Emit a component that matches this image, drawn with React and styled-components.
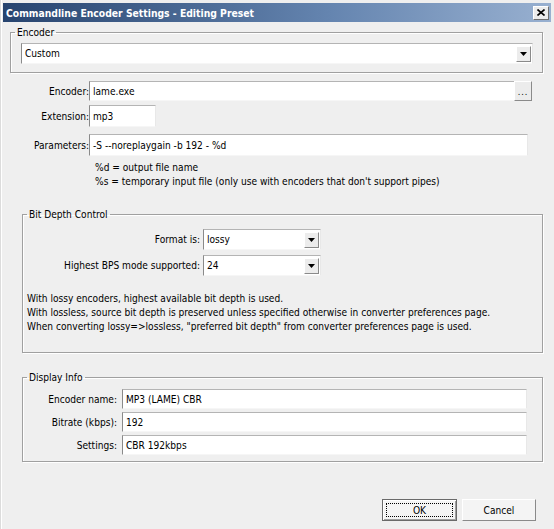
import React from 'react'
import styled, { createGlobalStyle } from 'styled-components'

const GlobalStyle = createGlobalStyle`
    html, body {
        margin: 0;
        padding: 0;
        background: #efefef;
    }
    body {
        font-family: "DejaVu Sans Condensed", "DejaVu Sans", sans-serif;
        font-size: 10.1px;
        color: #000;
    }
`

const Window = styled.div`
    width: 554px;
    height: 529px;
    box-sizing: border-box;
    padding: 3px 3px 8px 3px;
    display: flex;
    flex-direction: column;
    background: #efefef;
    box-shadow: inset 1px 0 0 #dcdcdc, inset 2px 0 0 #fff;
`

const TitleBar = styled.div`
    height: 19px;
    flex-shrink: 0;
    display: flex;
    align-items: center;
    justify-content: space-between;
    padding: 0 2px 0 3px;
    background: linear-gradient(to right, #27446f, #6585b0 60%, #98b0d0);
    color: #fff;
    font-weight: bold;
    font-size: 10.3px;
`

const CloseButton = styled.div`
    width: 14px;
    height: 12px;
    display: flex;
    align-items: center;
    justify-content: center;
    background: #ececec;
    border: 1px solid;
    border-color: #fff #6f6f6f #6f6f6f #fff;
`

const Group = styled.fieldset`
    margin: ${p => p.$top}px 8px 0 ${p => p.$left}px;
    padding: ${p => p.$pad};
    border: 1px solid #a0a0a0;
    box-shadow: 1px 1px 0 #fff, inset 1px 1px 0 #fff;
    min-width: 0;
`

const Legend = styled.legend`
    padding: 0 2px;
    margin-left: ${p => p.$offset}px;
    line-height: 13px;
`

const Field = styled.div`
    box-sizing: border-box;
    height: ${p => p.$h || 21}px;
    width: ${p => (p.$w ? `${p.$w}px` : 'auto')};
    background: #fff;
    border: 1px solid;
    border-color: #b4b4b4 #e8e8e8 #f6f6f6 #8a8a8a;
    padding-left: 3px;
    display: flex;
    align-items: center;
    white-space: nowrap;
`

const Combo = styled(Field)`
    justify-content: space-between;
    padding-right: 1px;
`

const DropButton = styled.div`
    width: 15px;
    height: 16px;
    box-sizing: border-box;
    background: #ececec;
    border: 1px solid;
    border-color: #fff #8a8a8a #8a8a8a #fff;
    display: flex;
    align-items: center;
    justify-content: center;
`

const Row = styled.div`
    display: grid;
    grid-template-columns: ${p => p.$label}px auto;
    column-gap: ${p => p.$gap || 0}px;
    align-items: center;
    margin-top: ${p => p.$top || 0}px;
`

const Label = styled.div`
    text-align: right;
    white-space: nowrap;
`

const FieldWithButton = styled.div`
    display: flex;
    align-items: center;
`

const BrowseButton = styled.div`
    width: 18px;
    height: 20px;
    box-sizing: border-box;
    margin-left: -2px;
    background: #ececec;
    border: 1px solid;
    border-color: #fff #8a8a8a #8a8a8a #fff;
    display: flex;
    align-items: flex-end;
    justify-content: center;
    padding-bottom: 3px;
    font-size: 9px;
    letter-spacing: 1px;
`

const Notes = styled.div`
    margin: ${p => p.$top}px 0 0 ${p => p.$left}px;
    line-height: 14px;
    white-space: nowrap;
`

const ButtonBar = styled.div`
    margin-top: auto;
    display: flex;
    justify-content: flex-end;
    gap: 5px;
    padding-right: 15px;
`

const Button = styled.div`
    width: ${p => p.$w}px;
    height: 22px;
    box-sizing: border-box;
    background: #f4f4f4;
    border: 1px solid;
    border-color: ${p => (p.$focused ? '#6a6a6a' : '#fff #8a8a8a #8a8a8a #fff')};
    box-shadow: ${p => (p.$focused ? 'inset 1px 1px 0 #fff, inset -1px -1px 0 #a0a0a0' : 'none')};
    display: flex;
    align-items: center;
    justify-content: center;
    padding: 3px;
`

const FocusRing = styled.div`
    flex: 1;
    align-self: stretch;
    border: 1px dotted #000;
    display: flex;
    align-items: center;
    justify-content: center;
`

const Arrow = () => (
    <svg width="7" height="4" viewBox="0 0 7 4">
        <path d="M0 0h7L3.5 4z" fill="#000" />
    </svg>
)

const Select = ({ value, w }) => (
    <Combo $w={w}>
        <span>{value}</span>
        <DropButton><Arrow /></DropButton>
    </Combo>
)

export default function App() {
    return (
        <>
            <GlobalStyle />
            <Window>
                <TitleBar>
                    <span>Commandline Encoder Settings - Editing Preset</span>
                    <CloseButton>
                        <svg width="8" height="7" viewBox="0 0 8 7">
                            <path d="M0.5 0.5L7.5 6.5M7.5 0.5L0.5 6.5" stroke="#000" strokeWidth="1.6" />
                        </svg>
                    </CloseButton>
                </TitleBar>

                <Group $top={4} $left={7} $pad="4px 9px 8px 10px">
                    <Legend $offset={-6}>Encoder</Legend>
                    <Select value="Custom" />
                </Group>

                <Row $label={86} $top={8}>
                    <Label>Encoder:</Label>
                    <FieldWithButton>
                        <Field $w={427} $h={20}>lame.exe</Field>
                        <BrowseButton>...</BrowseButton>
                    </FieldWithButton>
                </Row>
                <Row $label={86} $top={4}>
                    <Label>Extension:</Label>
                    <Field $w={67} $h={22}>mp3</Field>
                </Row>
                <Row $label={86} $top={7}>
                    <Label>Parameters:</Label>
                    <Field $w={439} $h={22}>-S --noreplaygain -b 192 - %d</Field>
                </Row>
                <Notes $top={5} $left={92}>
                    %d = output file name<br />
                    %s = temporary input file (only use with encoders that don't support pipes)
                </Notes>

                <Group $top={19} $left={19} $pad="8px 8px 18px 4px">
                    <Legend $offset={0}>Bit Depth Control</Legend>
                    <Row $label={173} $gap={3}>
                        <Label>Format is:</Label>
                        <Select value="lossy" w={118} />
                    </Row>
                    <Row $label={173} $gap={3} $top={5}>
                        <Label>Highest BPS mode supported:</Label>
                        <Select value="24" w={118} />
                    </Row>
                    <Notes $top={16} $left={0}>
                        With lossy encoders, highest available bit depth is used.<br />
                        With lossless, source bit depth is preserved unless specified otherwise in converter preferences page.<br />
                        When converting lossy=&gt;lossless, "preferred bit depth" from converter preferences page is used.
                    </Notes>
                </Group>

                <Group $top={18} $left={19} $pad="5px 15px 6px 4px">
                    <Legend $offset={0}>Display Info</Legend>
                    <Row $label={90} $gap={5}>
                        <Label>Encoder name:</Label>
                        <Field $h={20}>MP3 (LAME) CBR</Field>
                    </Row>
                    <Row $label={90} $gap={5} $top={3}>
                        <Label>Bitrate (kbps):</Label>
                        <Field $h={20}>192</Field>
                    </Row>
                    <Row $label={90} $gap={5} $top={3}>
                        <Label>Settings:</Label>
                        <Field $h={20}>CBR 192kbps</Field>
                    </Row>
                </Group>

                <ButtonBar>
                    <Button $w={75} $focused>
                        <FocusRing>OK</FocusRing>
                    </Button>
                    <Button $w={74}>Cancel</Button>
                </ButtonBar>
            </Window>
        </>
    )
}
